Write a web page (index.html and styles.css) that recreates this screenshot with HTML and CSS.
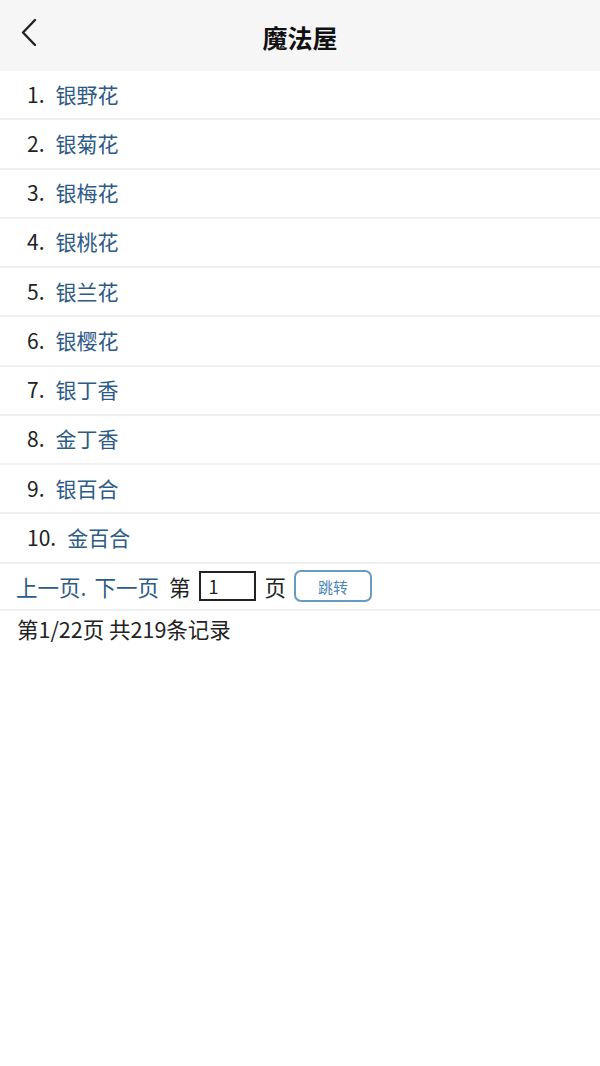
FILE: index.html
```html
<!DOCTYPE html>
<html lang="zh">
<head>
<meta charset="utf-8">
<title>魔法屋</title>
<link rel="stylesheet" href="styles.css">
</head>
<body>
<header class="topbar">
  <svg class="back" width="20" height="30" viewBox="0 0 20 30"><path d="M15 3 L3 15.5 L15 28" fill="none" stroke="#222" stroke-width="2.4" stroke-linecap="round" stroke-linejoin="round"/></svg>
  <h1 class="title">魔法屋</h1>
</header>
<ul class="list">
  <li class="row"><span class="num">1.</span><a class="link">银野花</a></li>
  <li class="row"><span class="num">2.</span><a class="link">银菊花</a></li>
  <li class="row"><span class="num">3.</span><a class="link">银梅花</a></li>
  <li class="row"><span class="num">4.</span><a class="link">银桃花</a></li>
  <li class="row"><span class="num">5.</span><a class="link">银兰花</a></li>
  <li class="row"><span class="num">6.</span><a class="link">银樱花</a></li>
  <li class="row"><span class="num">7.</span><a class="link">银丁香</a></li>
  <li class="row"><span class="num">8.</span><a class="link">金丁香</a></li>
  <li class="row"><span class="num">9.</span><a class="link">银百合</a></li>
  <li class="row"><span class="num">10.</span><a class="link">金百合</a></li>
</ul>
<div class="pager">
  <a class="plink">上一页.</a>
  <a class="plink">下一页</a>
  <span class="ptext">第</span>
  <span class="pinput">1</span>
  <span class="ptext">页</span>
  <span class="pbtn">跳转</span>
</div>
<div class="summary">第1/22页 共219条记录</div>
</body>
</html>
```
FILE: styles.css
```css
* { box-sizing: border-box; }
html, body { margin: 0; padding: 0; background: #fff; }
body {
  width: 600px;
  font-family: "Noto Sans CJK SC", "Noto Sans", sans-serif;
  color: #222;
}
.topbar {
  height: 71px;
  background: #f6f6f6;
  display: flex;
  align-items: center;
  justify-content: center;
  position: relative;
}
.back {
  position: absolute;
  left: 20px;
  top: 17px;
}
.title {
  margin: 0;
  font-size: 25px;
  font-weight: 700;
  color: #111;
  line-height: 1;
  margin-top: 4px;
}
.list {
  list-style: none;
  margin: 0;
  padding: 0;
}
.row {
  height: 49.25px;
  border-bottom: 2px solid #efefef;
  display: flex;
  align-items: center;
  padding-left: 27px;
  padding-bottom: 2px;
  font-size: 21px;
}
.num {
  color: #222;
  font-size: 21px;
  margin-right: 11px;
}
.link {
  color: #2d5b86;
}
.pager {
  height: 47px;
  border-bottom: 2px solid #efefef;
  display: flex;
  align-items: center;
  padding-left: 16px;
  font-size: 21.5px;
}
.plink { color: #2d5b86; margin-right: 8px; }
.plink + .plink { margin-right: 10px; }
.ptext { color: #222; }
.pinput {
  width: 57px;
  height: 30px;
  border: 2px solid #222;
  margin: 0 9px 0 8px;
  font-size: 18px;
  line-height: 26px;
  padding-left: 8px;
}
.pbtn {
  width: 78px;
  height: 32px;
  border: 2px solid #6a9ac0;
  border-radius: 7px;
  margin-left: 8px;
  color: #4a86b8;
  font-size: 15px;
  display: flex;
  align-items: center;
  justify-content: center;
}
.summary {
  padding: 2px 0 0 17px;
  font-size: 21.5px;
  color: #222;
}
```
